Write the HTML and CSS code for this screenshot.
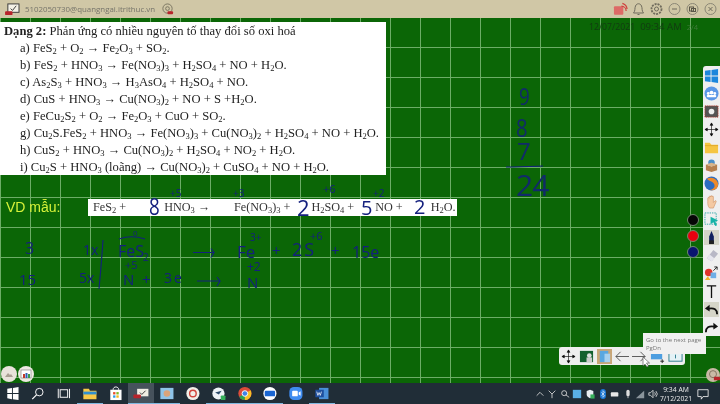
FILE: index.html
```html
<!DOCTYPE html>
<html lang="en">
  <head>
    <meta charset="UTF-8">
    <title>Bang dien tu</title>
    <link rel="stylesheet" href="styles.css">
  </head>
  <body>
    <header class="topbar">
      <div class="account">
        <svg class="ic14" viewBox="0 0 16 14"><rect x="3" y="1" width="12" height="9" fill="#f4f1e6" stroke="#333"/><path d="M6 6l2 2 4-5" fill="none" stroke="#333"/><rect x="0" y="9" width="8" height="4" rx="1" fill="#b8232a"/></svg>
        <span class="email">5102050730@quangngai.itrithuc.vn</span>
        <svg class="ic14 account-gear" viewBox="0 0 14 14"><circle cx="7" cy="6" r="5" fill="none" stroke="#77725f"/><circle cx="7" cy="6" r="2" fill="none" stroke="#77725f"/><rect x="7" y="9" width="6" height="3" rx="1" fill="#b8232a"/></svg>
      </div>
      <div class="window-btns">
        <svg class="ic16" viewBox="0 0 16 14"><rect x="1" y="4" width="10" height="9" rx="1" fill="#dd6a66"/><path d="M9 4a5 5 0 0 1 5 5M10 1a7 7 0 0 1 5 6" fill="none" stroke="#cf3e3a" stroke-width="1.3"/></svg>
        <svg class="ic16" viewBox="0 0 14 14"><path d="M2 11c2-2 1-5 2-7 1-3 5-3 6 0 1 2 0 5 2 7zM6 12.5h2" fill="none" stroke="#6f6b5c"/></svg>
        <svg class="ic16" viewBox="0 0 14 14"><circle cx="7" cy="7" r="5" fill="none" stroke="#6f6b5c" stroke-width="1.8" stroke-dasharray="2 1"/><circle cx="7" cy="7" r="2" fill="none" stroke="#6f6b5c"/></svg>
        <svg class="ic16" viewBox="0 0 14 14"><circle cx="7" cy="7" r="5.5" fill="none" stroke="#8b8776"/><path d="M4.5 7h5" stroke="#6f6b5c"/></svg>
        <svg class="ic16" viewBox="0 0 14 14"><circle cx="7" cy="7" r="5.5" fill="none" stroke="#8b8776"/><rect x="4" y="5" width="4" height="4" fill="none" stroke="#5a5749"/><rect x="6" y="6.5" width="4" height="3" fill="none" stroke="#5a5749"/></svg>
        <svg class="ic16" viewBox="0 0 14 14"><circle cx="7" cy="7" r="5.5" fill="none" stroke="#8b8776"/><path d="M5 5l4 4M9 5l-4 4" stroke="#6f6b5c"/></svg>
      </div>
    </header>

    <main class="board">
      <section class="problem-card">
        <p><b>Dạng 2:</b> Phản ứng có nhiều nguyên tố thay đổi số oxi hoá</p>
        <ol class="problem-list">
          <li>a) FeS<sub>2</sub> + O<sub>2</sub> → Fe<sub>2</sub>O<sub>3</sub> + SO<sub>2</sub>.</li>
          <li>b) FeS<sub>2</sub> + HNO<sub>3</sub> → Fe(NO<sub>3</sub>)<sub>3</sub> + H<sub>2</sub>SO<sub>4</sub> + NO + H<sub>2</sub>O.</li>
          <li>c) As<sub>2</sub>S<sub>3</sub> + HNO<sub>3</sub> → H<sub>3</sub>AsO<sub>4</sub> + H<sub>2</sub>SO<sub>4</sub> + NO.</li>
          <li>d) CuS + HNO<sub>3</sub> → Cu(NO<sub>3</sub>)<sub>2</sub> + NO + S +H<sub>2</sub>O.</li>
          <li>e) FeCu<sub>2</sub>S<sub>2</sub> + O<sub>2</sub> → Fe<sub>2</sub>O<sub>3</sub> + CuO + SO<sub>2</sub>.</li>
          <li>g) Cu<sub>2</sub>S.FeS<sub>2</sub> + HNO<sub>3</sub> → Fe(NO<sub>3</sub>)<sub>3</sub> + Cu(NO<sub>3</sub>)<sub>2</sub> + H<sub>2</sub>SO<sub>4</sub> + NO + H<sub>2</sub>O.</li>
          <li>h) CuS<sub>2</sub> + HNO<sub>3</sub> → Cu(NO<sub>3</sub>)<sub>2</sub> + H<sub>2</sub>SO<sub>4</sub> + NO<sub>2</sub> + H<sub>2</sub>O.</li>
          <li>i) Cu<sub>2</sub>S + HNO<sub>3</sub> (loãng) → Cu(NO<sub>3</sub>)<sub>2</sub> + CuSO<sub>4</sub> + NO + H<sub>2</sub>O.</li>
        </ol>
      </section>

      <div class="page-stamp">
        <span class="stamp-date">12/07/2021</span>
        <span class="stamp-time">09:34 AM</span>
        <span class="stamp-page">2/4</span>
      </div>

      <span class="vd-label">VD mẫu:</span>
      <div class="equation">
        <span class="term t1">FeS<sub>2</sub> +</span>
        <span class="term t2">HNO<sub>3</sub> →</span>
        <span class="term t3">Fe(NO<sub>3</sub>)<sub>3</sub> +</span>
        <span class="term t4">H<sub>2</sub>SO<sub>4</sub> +</span>
        <span class="term t5">NO +</span>
        <span class="term t6">H<sub>2</sub>O.</span>
      </div>

      <!-- handwriting: digits stay as text, only the pen lines are svg -->
      <span class="ink narrow k8">8</span>
      <span class="ink k2a">2</span>
      <span class="ink k5">5</span>
      <span class="ink k2b">2</span>
      <span class="ink ox5">+5</span>
      <span class="ink ox3">+3</span>
      <span class="ink ox6">+6</span>
      <span class="ink ox2">+2</span>

      <span class="ink n3">3</span>
      <span class="ink n15">15</span>
      <span class="ink m1x">1x</span>
      <span class="ink m5x">5x</span>
      <span class="ink fes">FeS</span>
      <span class="ink fes-sub">2</span>
      <span class="ink fes-ox">0</span>
      <span class="ink n-left">N</span>
      <span class="ink n-left-ox">+5</span>
      <span class="ink plus-a">+</span>
      <span class="ink e3">3e</span>
      <span class="ink fe">Fe</span>
      <span class="ink fe-ox">3+</span>
      <span class="ink plus-b">+</span>
      <span class="ink s2">2S</span>
      <span class="ink s-ox">+6</span>
      <span class="ink plus-c">+</span>
      <span class="ink e15">15e</span>
      <span class="ink n-right">N</span>
      <span class="ink n-right-ox">+2</span>

      <span class="ink narrow sum9">9</span>
      <span class="ink narrow sum8">8</span>
      <span class="ink sum7">7</span>
      <span class="ink sum24">24</span>

      <svg class="ink-lines" viewBox="0 18 720 365">
        <path d="M103 240C102 255 101 268 99 289"/>
        <path d="M119 239c8-3 17-3 26 0"/>
        <path d="M193 252.500h21l-3-4M214 252.500l-3 5"/>
        <path d="M197 281h23l-3-4M220 281l-3 5"/>
        <path d="M506 167c13 0 24-.5 37-1"/>
      </svg>

      <aside class="tool-dots">
        <i class="dot dot-black"></i>
        <i class="dot dot-red"></i>
        <i class="dot dot-navy"></i>
      </aside>

      <nav class="side-tools">
        <svg viewBox="0 0 16 16"><path d="M1 3l6-1v6H1zM8 2l7-1v7H8zM1 9h6v6l-6-1zM8 9h7v7l-7-1z" fill="#1c86dc"/></svg>
        <svg viewBox="0 0 16 16"><circle cx="8" cy="8" r="7.5" fill="#5a97e6"/><circle cx="8" cy="7" r="2" fill="#fff"/><circle cx="4.5" cy="8" r="1.5" fill="#fff"/><circle cx="11.5" cy="8" r="1.5" fill="#fff"/><rect x="3" y="9.5" width="10" height="2.5" rx="1" fill="#fff"/></svg>
        <svg viewBox="0 0 16 16"><rect x="1" y="2" width="14" height="12" fill="#555" stroke="#c0392b" stroke-dasharray="1 1"/><circle cx="8" cy="8" r="3" fill="#eee"/></svg>
        <svg viewBox="0 0 16 16"><path d="M8 1v14M1 8h14M8 1L6.500 3.500h3zM8 15l-1.500-2.500h3zM1 8l2.500-1.500v3zM15 8l-2.500-1.500v3z" fill="#111" stroke="#111" stroke-width=".7"/></svg>
        <svg viewBox="0 0 16 16"><path d="M1 3h5l2 2h7v9H1z" fill="#f5c542"/><path d="M1 6h14" stroke="#e0a92a"/></svg>
        <svg viewBox="0 0 16 16"><path d="M2 7l6 2 6-2v6l-6 2-6-2z" fill="#b5804f"/><circle cx="8" cy="5" r="3.5" fill="#4a8fc9"/><path d="M2 7l6-2 6 2-6 2z" fill="#d8b48a"/></svg>
        <svg viewBox="0 0 16 16"><circle cx="8" cy="8" r="7.5" fill="#2d6cc0"/><path d="M3 3c6-3 12 1 12 6s-5 7-9 6c4-1 6-3 5-6C10 6 6 6 3 3z" fill="#ee8a2a"/></svg>
        <svg viewBox="0 0 16 16"><path d="M4 8V4.500c0-1 1.500-1 1.500 0V3c0-1 1.500-1 1.500 0v-.5c0-1 1.500-1 1.500 0V3c0-1 1.500-1 1.500 0v6l1.500-1.500c1-1 2 0 1.300 1L10 15H6C4 13 4 11 4 8z" fill="#f4c9a2" stroke="#c98d5e" stroke-width=".6"/></svg>
        <svg viewBox="0 0 16 16"><rect x="1" y="1" width="12" height="12" fill="none" stroke="#3aa" stroke-dasharray="1.5 1"/><path d="M7 5l8 4-3 1 2 4-2 1-2-4-3 2z" fill="#17b3a8"/></svg>
        <svg class="tool-on" viewBox="0 0 16 16"><path d="M8 1l2.500 6v8h-5V7z" fill="#10205f"/><path d="M5.500 11h5v4h-5z" fill="#222"/></svg>
        <svg viewBox="0 0 16 16"><path d="M10 2l5 4-7 8-5-3z" fill="#b8b8c6"/><path d="M3 11l3-4 5 4-3 3z" fill="#e6e6ee"/></svg>
        <svg viewBox="0 0 16 16"><circle cx="5" cy="7" r="4" fill="#e0352b"/><rect x="7" y="7" width="6" height="6" fill="#6faee6"/><path d="M1 15l3-4 3 4z" fill="#f0b429"/><path d="M10 5l4-4M14 1h-3M14 1v3" fill="none" stroke="#222"/></svg>
        <svg viewBox="0 0 16 16"><path d="M3 2h10M8 2v13" fill="none" stroke="#111" stroke-width="1.4"/></svg>
        <svg class="tool-on" viewBox="0 0 16 16"><path d="M14 13c0-5-3-7-9-6" fill="none" stroke="#111" stroke-width="2"/><path d="M6 3L1 7l5 3z" fill="#111"/></svg>
        <svg viewBox="0 0 16 16"><path d="M2 13c0-5 3-7 9-6" fill="none" stroke="#111" stroke-width="2"/><path d="M10 3l5 4-5 3z" fill="#111"/></svg>
      </nav>

      <nav class="page-tools">
        <svg viewBox="0 0 16 16"><path d="M8 1v14M1 8h14M8 1L6.500 3.500h3zM8 15l-1.500-2.500h3zM1 8l2.500-1.500v3zM15 8l-2.500-1.500v3z" fill="#111" stroke="#111" stroke-width=".7"/></svg>
        <svg viewBox="0 0 16 16"><rect x="1" y="2" width="14" height="12" fill="#14602e"/><circle cx="11" cy="7" r="2.500" fill="#ddd"/><rect x="8" y="9" width="6" height="5" fill="#ccc"/></svg>
        <svg class="page-on" viewBox="0 0 16 16"><rect x="3" y="2" width="9" height="12" fill="#5aa7e0"/><path d="M8 5h6v9H8z" fill="#a8d0ee"/></svg>
        <svg viewBox="0 0 16 16"><path d="M16 8H2M7 3L2 8l5 5" fill="none" stroke="#555"/></svg>
        <svg viewBox="0 0 16 16"><path d="M0 8h14M9 3l5 5-5 5" fill="none" stroke="#555"/></svg>
        <svg viewBox="0 0 16 16"><rect x="1" y="3" width="12" height="8" fill="#4d9ee0"/><path d="M11 13h4M13 11v4" stroke="#222"/></svg>
        <svg viewBox="0 0 16 16"><rect x="1" y="3" width="14" height="10" fill="#e4f2f6" stroke="#2b7a8c"/><path d="M8 6v4" stroke="#2b7a8c"/></svg>
      </nav>

      <div class="tooltip">
        <span>Go to the next page</span>
        <span>PgDn</span>
      </div>
      <svg class="cursor" viewBox="0 0 8 12"><path d="M1 1v9l2-2 2 3 1.500-1-2-3h3z" fill="#fff" stroke="#444" stroke-width=".6"/></svg>

      <svg class="float-btn fb1" viewBox="0 0 16 16"><circle cx="8" cy="8" r="8" fill="#e8e2da"/><path d="M4 11l3-4 2 2 1-1 2 3z" fill="#a89e92"/></svg>
      <svg class="float-btn fb2" viewBox="0 0 16 16"><circle cx="8" cy="8" r="8" fill="#eee9e2"/><rect x="3" y="4" width="10" height="8" fill="#fff" stroke="#777" stroke-width=".6"/><rect x="5" y="8" width="2" height="4" fill="#c0392b"/><rect x="7.500" y="7" width="2" height="5" fill="#2b5fb8"/><rect x="10" y="8" width="2" height="4" fill="#3a9a4a"/></svg>
      <svg class="float-btn fb3" viewBox="0 0 16 16"><circle cx="8" cy="8" r="8" fill="#c9b9a6"/><circle cx="8" cy="7" r="4" fill="none" stroke="#7a6a58"/><rect x="9" y="10" width="7" height="4" rx="1" fill="#b8232a"/></svg>
    </main>

    <footer class="taskbar">
      <div class="task-left">
        <svg viewBox="0 0 16 16"><path d="M2 3l5-1v5.500H2zM8 2l6-1v6.500H8zM2 8.500h5V14l-5-1zM8 8.500h6V15l-6-1z" fill="#fff"/></svg>
        <svg viewBox="0 0 16 16"><circle cx="9.500" cy="6.500" r="4" fill="none" stroke="#fff"/><path d="M6.500 9.500L2 14" stroke="#fff" stroke-width="1.3"/></svg>
        <svg viewBox="0 0 16 16"><rect x="4" y="4" width="8" height="8" fill="none" stroke="#fff"/><path d="M2 3v10M14 3v10" stroke="#fff"/></svg>
        <svg class="running" viewBox="0 0 16 16"><path d="M1 3h6l1 2h7v9H1z" fill="#f7c948"/><rect x="1" y="6" width="14" height="3" fill="#2f8fd0"/></svg>
        <svg viewBox="0 0 16 16"><rect x="2" y="4" width="12" height="11" fill="#fff"/><path d="M5 4c0-4 6-4 6 0" fill="none" stroke="#fff"/><rect x="5" y="6.500" width="2.500" height="2.500" fill="#e8502c"/><rect x="8.500" y="6.500" width="2.500" height="2.500" fill="#7db928"/><rect x="5" y="10" width="2.500" height="2.500" fill="#2c9be8"/><rect x="8.500" y="10" width="2.500" height="2.500" fill="#f4b619"/></svg>
        <svg class="running active" viewBox="0 0 16 16"><rect x="4" y="3" width="12" height="8" fill="#f0eee4"/><path d="M7 7l2 2 4-4" fill="none" stroke="#333"/><rect x="0" y="9" width="8" height="4" rx="1" fill="#b8232a"/></svg>
        <svg class="running" viewBox="0 0 16 16"><rect x="1" y="2" width="14" height="12" fill="#8fc4e8"/><circle cx="8" cy="8" r="3.500" fill="#dba47a"/></svg>
        <svg viewBox="0 0 16 16"><circle cx="8" cy="8" r="7" fill="#f2efe8"/><circle cx="8" cy="8" r="3.500" fill="none" stroke="#d2453c" stroke-width="1.5"/></svg>
        <svg class="running" viewBox="0 0 16 16"><circle cx="7.500" cy="8" r="6.500" fill="#eef3f6"/><path d="M4 7l7-2-3 4z" fill="#2b4a6a"/><rect x="10" y="10" width="5" height="5" rx="1" fill="#35b05a"/></svg>
        <svg class="running" viewBox="0 0 16 16"><circle cx="8" cy="8" r="7" fill="#dd4b39"/><path d="M8 8L2 11.500A7 7 0 0 0 8 15z" fill="#2aa44f"/><path d="M8 8l6-3.500A7 7 0 0 1 8 15z" fill="#f6c026"/><circle cx="8" cy="8" r="3" fill="#3f83e8" stroke="#fff"/></svg>
        <svg class="running" viewBox="0 0 16 16"><circle cx="8" cy="8" r="7" fill="#fff"/><rect x="2.500" y="5" width="11" height="6" rx="1" fill="#1a66d2"/></svg>
        <svg viewBox="0 0 16 16"><rect x="1" y="1" width="14" height="14" rx="5" fill="#3f8cf0"/><rect x="4" y="5" width="6" height="6" rx="1" fill="#fff"/><path d="M11 7l2-1.500v5L11 9z" fill="#fff"/></svg>
        <svg class="running" viewBox="0 0 16 16"><rect x="5" y="2" width="10" height="12" fill="#4a90d9"/><rect x="1" y="4" width="9" height="8" fill="#1e4f9e"/><path d="M2.500 6l1.200 4 1.300-3 1.300 3 1.200-4" fill="none" stroke="#fff" stroke-width=".8"/></svg>
      </div>
      <div class="task-right">
        <span class="tray">
          <svg viewBox="0 0 12 12"><path d="M2 8l4-4 4 4" fill="none" stroke="#ddd"/></svg>
          <svg viewBox="0 0 12 12"><path d="M2 2l4 4 4-4M6 6v5" fill="none" stroke="#ddd"/></svg>
          <svg viewBox="0 0 12 12"><circle cx="5" cy="5" r="3" fill="none" stroke="#ddd"/><path d="M7 7l4 3" stroke="#ddd"/></svg>
          <svg viewBox="0 0 12 12"><rect x="1" y="1" width="10" height="10" fill="#5ab0e6"/></svg>
          <svg viewBox="0 0 12 12"><path d="M6 1l4 1.500V7c0 2-2 3-4 4-2-1-4-2-4-4V2.500z" fill="#e8eef2"/><rect x="6.500" y="6.500" width="5" height="5" fill="#35b05a"/></svg>
          <svg viewBox="0 0 12 12"><rect x="2.500" y="0" width="7" height="12" rx="3.500" fill="#1a78d8"/><path d="M4 4l4 4-2 2V2l2 2-4 4" fill="none" stroke="#fff" stroke-width=".7"/></svg>
          <svg viewBox="0 0 12 12"><rect x="1" y="4" width="9" height="5" rx="1" fill="#e8e8e8"/></svg>
          <svg viewBox="0 0 12 12"><rect x="4" y="1" width="4" height="8" rx="2" fill="#ddd"/><path d="M6 9v2" stroke="#ddd"/></svg>
          <svg viewBox="0 0 12 12"><path d="M1 11L11 2v9z" fill="#8a949b"/></svg>
          <svg viewBox="0 0 12 12"><path d="M1 4.500h2l3-3v9l-3-3H1zM8 4a3 3 0 0 1 0 4M9.500 2.500a5 5 0 0 1 0 7" fill="none" stroke="#ddd"/></svg>
        </span>
        <time class="clock"><span>9:34 AM</span><span>7/12/2021</span></time>
        <svg class="notify" viewBox="0 0 14 14"><path d="M1 2h12v8H7l-2 3v-3H1z" fill="none" stroke="#eee"/></svg>
      </div>
    </footer>
  </body>
</html>
```

FILE: styles.css
```css
* {
  margin: 0;
  padding: 0;
  box-sizing: border-box;
}

html, body {
  width: 720px;
  height: 404px;
  overflow: hidden;
}

body {
  display: flex;
  flex-direction: column;
  font-family: "Liberation Sans", sans-serif;
  background-color: #0b6606;
  filter: blur(.3px);
}

svg {
  display: block;
}

/* top bar */
.topbar {
  height: 18px;
  flex: none;
  display: flex;
  justify-content: space-between;
  align-items: center;
  padding-left: 5px;
  background-color: #d0c7a6;
}

.account {
  display: flex;
  align-items: center;
}

.ic14 {
  width: 15px;
  height: 13px;
}

.email {
  margin-left: 5px;
  font-family: "Open Sans", sans-serif;
  font-size: 7.9px;
  color: #76746a;
}

.account-gear {
  margin-left: 5px;
}

.window-btns {
  display: flex;
  align-items: center;
  gap: 3px;
  padding-right: 2px;
}

.ic16 {
  width: 15px;
  height: 14px;
}

/* board */
.board {
  position: relative;
  flex: 1;
  background-color: #0b6606;
  background-image:
    linear-gradient(to right, #6cad66 1px, transparent 1px),
    linear-gradient(to bottom, #6cad66 1px, transparent 1px);
  background-size: 30px 30px;
  background-position: 0 -1px;
}

.problem-card {
  position: absolute;
  left: 0;
  top: 4px;
  width: 386px;
  height: 153px;
  padding: 1px 0 0 4px;
  background-color: #fff;
  font-family: "Liberation Serif", serif;
  font-size: 12.6px;
  line-height: 17px;
  color: #222;
}

.problem-list {
  list-style: none;
  padding-left: 16px;
}

sub {
  font-size: 8.5px;
  line-height: 0;
  vertical-align: -2px;
}

.page-stamp {
  position: absolute;
  left: 589px;
  top: 2px;
  display: flex;
  align-items: baseline;
  gap: 5px;
  color: #123a12;
  font-family: "Open Sans", sans-serif;
}

.stamp-date {
  font-size: 8.7px;
}

.stamp-time {
  font-size: 9.6px;
}

.stamp-page {
  font-size: 7.5px;
  color: #3f7a3a;
}

.vd-label {
  position: absolute;
  left: 6px;
  top: 181px;
  font-size: 14px;
  line-height: 16px;
  color: #d6f23a;
}

.equation {
  position: absolute;
  left: 88px;
  top: 181px;
  width: 369px;
  height: 17px;
  display: flex;
  align-items: center;
  background-color: #fff;
  font-family: "Liberation Serif", serif;
  font-size: 12.2px;
  color: #333;
}

.t1 { margin-left: 5px; }
.t2 { margin-left: 38px; }
.t3 { margin-left: 24px; }
.t4 { margin-left: 21px; }
.t5 { margin-left: 21px; }
.t6 { margin-left: 28px; }

/* handwriting, placed on the board like the pen left it */
.ink {
  position: absolute;
  font-family: "Open Sans", sans-serif;
  color: #14207e;
  white-space: nowrap;
  line-height: 1;
}

.narrow {
  transform: scaleX(.78);
  transform-origin: left;
}

.k8 { left: 149px; top: 176px; font-size: 24px; }
.k2a { left: 297px; top: 178px; font-size: 22px; }
.k5 { left: 361px; top: 180px; font-size: 20px; }
.k2b { left: 414px; top: 179px; font-size: 20px; }
.ox5 { left: 170px; top: 170px; font-size: 10px; }
.ox3 { left: 233px; top: 170px; font-size: 10px; }
.ox6 { left: 323px; top: 165px; font-size: 11px; }
.ox2 { left: 373px; top: 170px; font-size: 10px; }

.n3 { left: 25px; top: 222px; font-size: 16px; }
.n15 { left: 19px; top: 254px; font-size: 15px; }
.m1x { left: 83px; top: 225px; font-size: 14px; }
.m5x { left: 79px; top: 253px; font-size: 14px; }
.fes { left: 118px; top: 225px; font-size: 16px; }
.fes-sub { left: 143px; top: 234px; font-size: 10px; }
.fes-ox { left: 133px; top: 211px; font-size: 8px; }
.n-left { left: 123px; top: 254px; font-size: 15px; }
.n-left-ox { left: 125px; top: 241px; font-size: 11px; }
.plus-a { left: 142px; top: 254px; font-size: 15px; }
.e3 { left: 164px; top: 253px; font-size: 14px; letter-spacing: 2px; }
.fe { left: 237px; top: 225px; font-size: 17px; }
.fe-ox { left: 250px; top: 214px; font-size: 10px; }
.plus-b { left: 272px; top: 225px; font-size: 15px; }
.s2 { left: 292px; top: 222px; font-size: 18px; letter-spacing: 2px; }
.s-ox { left: 310px; top: 212px; font-size: 11px; }
.plus-c { left: 331px; top: 225px; font-size: 15px; }
.e15 { left: 352px; top: 226px; font-size: 16px; }
.n-right { left: 247px; top: 257px; font-size: 15px; }
.n-right-ox { left: 247px; top: 243px; font-size: 12px; }

.sum9 { left: 519px; top: 66px; font-size: 24px; color: #112a6a; }
.sum8 { left: 516px; top: 96px; font-size: 26px; color: #112a6a; }
.sum7 { left: 517px; top: 121px; font-size: 24px; color: #112a6a; }
.sum24 { left: 516px; top: 152px; font-size: 30px; letter-spacing: -1px; color: #112a6a; }

.ink-lines {
  position: absolute;
  inset: 0;
  width: 720px;
  height: 365px;
  pointer-events: none;
}

.ink-lines path {
  fill: none;
  stroke: #14207e;
  stroke-width: 1.1;
}

/* pen colours */
.tool-dots {
  position: absolute;
  left: 687px;
  top: 196px;
  display: flex;
  flex-direction: column;
  gap: 4px;
}

.dot {
  display: block;
  width: 12px;
  height: 12px;
  border-radius: 50%;
  border: 1px solid #6f8a6c;
}

.dot-black { background-color: #060606; }
.dot-red { background-color: #e8000f; }
.dot-navy { background-color: #0a1470; }

/* right toolbar */
.side-tools {
  position: absolute;
  right: 0;
  top: 48px;
  width: 17px;
  height: 270px;
  display: flex;
  flex-direction: column;
  align-items: center;
  padding-top: 2px;
  gap: 3px;
  background-color: #efefef;
  border-radius: 3px 0 0 3px;
}

.side-tools svg {
  width: 15px;
  height: 15px;
  flex: none;
}

.tool-on {
  background-color: #d5d5c8;
}

/* page toolbar */
.page-tools {
  position: absolute;
  left: 559px;
  top: 329px;
  width: 126px;
  height: 18px;
  display: flex;
  align-items: center;
  justify-content: space-between;
  padding: 0 2px;
  background-color: #eee;
  border-radius: 3px;
}

.page-tools svg {
  width: 15px;
  height: 15px;
}

.page-on {
  background-color: #c9a677;
}

.tooltip {
  position: absolute;
  left: 643px;
  top: 315px;
  width: 63px;
  height: 21px;
  display: flex;
  flex-direction: column;
  justify-content: center;
  padding-left: 3px;
  background-color: #f0f0f0;
  font-family: "Open Sans", sans-serif;
  font-size: 6px;
  line-height: 8px;
  color: #777;
  white-space: nowrap;
}

.cursor {
  position: absolute;
  left: 642px;
  top: 338px;
  width: 8px;
  height: 12px;
}

.float-btn {
  position: absolute;
  width: 16px;
  height: 16px;
}

.fb1 { left: 1px; top: 348px; }
.fb2 { left: 18px; top: 348px; }
.fb3 { left: 706px; top: 350px; width: 14px; height: 14px; }

/* taskbar */
.taskbar {
  height: 21px;
  flex: none;
  display: flex;
  justify-content: space-between;
  align-items: center;
  background-color: #202d37;
  color: #eee;
}

.task-left {
  display: flex;
  align-items: center;
  margin-left: -.5px;
}

.task-left svg {
  width: 25.8px;
  height: 21px;
  padding: 3px 5px 2px;
  border-bottom: 1px solid transparent;
}

.task-left .running {
  border-bottom-color: #7fb8e0;
}

.task-left .active {
  background-color: #46525c;
}

.task-right {
  display: flex;
  align-items: center;
}

.tray {
  display: flex;
  gap: 2.6px;
  margin-right: 4px;
}

.tray svg {
  width: 10px;
  height: 12px;
}

.clock {
  display: flex;
  flex-direction: column;
  align-items: center;
  width: 28px;
  font-family: "Open Sans", sans-serif;
  font-size: 6.8px;
  line-height: 9px;
  white-space: nowrap;
}

.notify {
  width: 12px;
  height: 12px;
  margin: 0 11px 0 7px;
}
```
